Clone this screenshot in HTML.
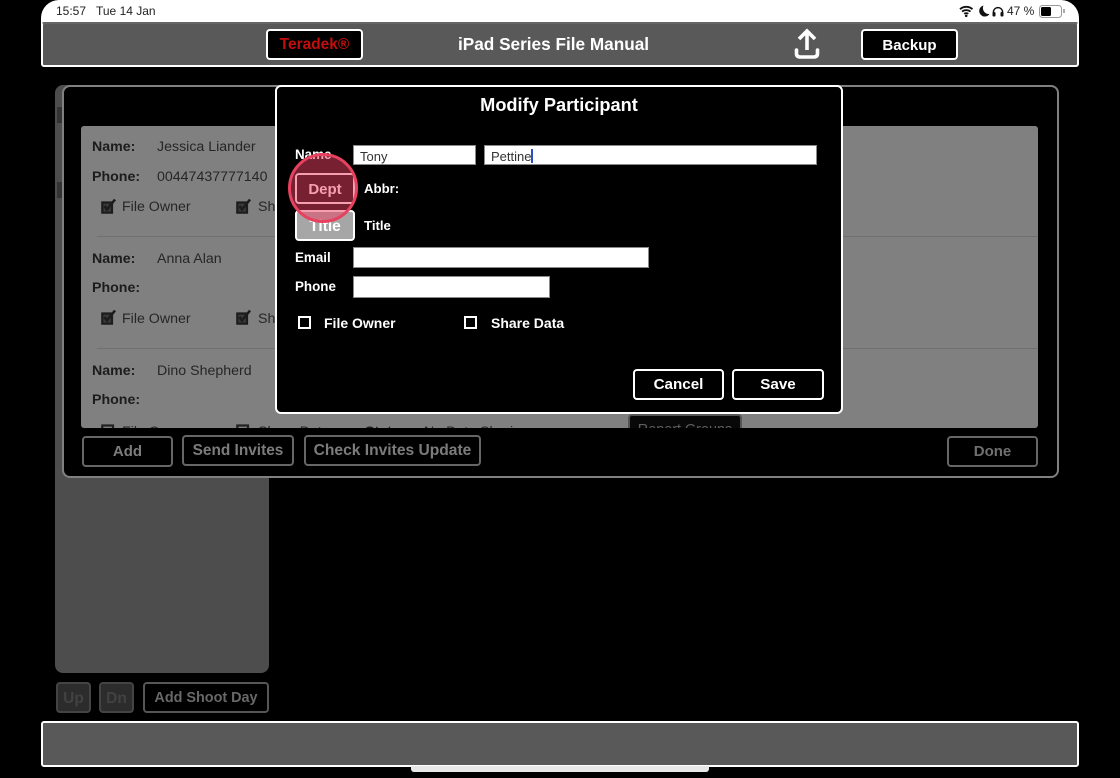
<!DOCTYPE html>
<html><head><meta charset="utf-8">
<style>
html,body{margin:0;padding:0;background:#000;}
#p{position:relative;width:1120px;height:778px;overflow:hidden;background:#000;font-family:"Liberation Sans",sans-serif;filter:blur(.35px);}
#p div{position:absolute;box-sizing:border-box;white-space:nowrap;}
.t{line-height:20px;}
.btn{border:2px solid #fff;border-radius:4px;background:#000;color:#fff;font-weight:bold;text-align:center;font-size:15.5px;}
.dim{border:2px solid #666;border-radius:4px;color:#7c7c7c;font-weight:bold;text-align:center;font-size:15.5px;background:#000;}
.lb{font-size:14.2px;color:#1c1c1c;font-weight:bold;}
.v{font-size:14.2px;color:#262626;}
.w{color:#fff;font-weight:bold;font-size:13.4px;}
.in{background:#fff;border:1.5px solid #8a8a8a;color:#333;font-size:13px;line-height:21px;padding-left:6px;}
.sep{height:1px;background:#707070;}
.cb{width:13px;height:13px;border:2px solid #fff;background:#000;}
</style></head><body>
<div id="p">
<!-- status bar -->
<div style="left:41px;top:0;width:1038px;height:26px;background:#fff;border-radius:18px 18px 0 0;"></div>
<div class="t" style="left:56px;top:1px;font-size:12px;color:#222;">15:57</div>
<div class="t" style="left:96px;top:1px;font-size:12px;color:#222;">Tue 14 Jan</div>
<svg style="position:absolute;left:958px;top:4px" width="50" height="14" viewBox="0 0 50 14">
<path d="M2 5.2C5.5 2 11 2 14.5 5.2M4 7.6C6.3 5.6 10.2 5.6 12.5 7.6M6.2 9.8C7.3 8.9 9.2 8.9 10.3 9.8" fill="none" stroke="#111" stroke-width="1.8"/>
<circle cx="8.2" cy="11.8" r="1.3" fill="#111"/>
<path d="M25.5 1.5A5.6 5.6 0 1 0 31.5 10A6 6 0 0 1 25.5 1.5Z" fill="#111"/>
<path d="M35.5 10.5V7A4.7 4.7 0 0 1 44.5 7V10.5" fill="none" stroke="#111" stroke-width="1.5"/>
<rect x="34.5" y="8" width="3" height="4.5" rx="1" fill="#111"/><rect x="42.5" y="8" width="3" height="4.5" rx="1" fill="#111"/>
</svg>
<div class="t" style="left:1007px;top:1px;font-size:12px;color:#222;">47 %</div>
<div style="left:1039px;top:5px;width:23px;height:13px;border:1px solid #999;border-radius:3.5px;"></div>
<div style="left:1041px;top:7px;width:10px;height:9px;background:#000;border-radius:1.5px;"></div>
<div style="left:1063px;top:9px;width:1.5px;height:4px;background:#aaa;"></div>

<!-- header -->
<div style="left:41px;top:22px;width:1038px;height:45px;background:#595959;border:2px solid #fff;border-top-color:#666;border-radius:3px;"></div>
<div class="btn" style="left:266px;top:29px;width:97px;height:31px;color:#c40d0d;line-height:28px;">Teradek®</div>
<div class="t" style="left:458px;top:34px;font-size:17.2px;font-weight:bold;color:#fff;">iPad Series File Manual</div>
<svg style="position:absolute;left:791px;top:27px" width="32" height="34" viewBox="0 0 32 34">
<path d="M16 23V4.5M8 12L16 4L24 12" fill="none" stroke="#fff" stroke-width="3.6"/>
<path d="M5.5 23V26.5Q5.5 30 9.5 30H22.5Q26.5 30 26.5 26.5V23" fill="none" stroke="#fff" stroke-width="3.6" stroke-linecap="round"/>
</svg>
<div class="btn" style="left:861px;top:29px;width:97px;height:31px;line-height:29px;font-size:15px;">Backup</div>

<!-- left panel -->
<div style="left:55px;top:85px;width:214px;height:588px;background:#4d4d4d;border-radius:8px;"></div>
<div style="left:57px;top:107px;width:5px;height:16px;background:#333;"></div>
<div style="left:57px;top:182px;width:5px;height:16px;background:#333;"></div>
<div class="dim" style="left:56px;top:682px;width:35px;height:31px;background:#2c2c2c;border-color:#444;color:#424242;line-height:29px;">Up</div>
<div class="dim" style="left:99px;top:682px;width:35px;height:31px;background:#2c2c2c;border-color:#444;color:#424242;line-height:29px;">Dn</div>
<div class="dim" style="left:143px;top:682px;width:126px;height:31px;border-color:#565656;color:#686868;line-height:28px;font-size:14.4px;">Add Shoot Day</div>

<!-- bottom bar -->
<div style="left:41px;top:721px;width:1038px;height:46px;background:#595959;border:2px solid #fff;border-radius:3px;"></div>
<div style="left:411px;top:766px;width:298px;height:5.5px;background:#e8e8e8;border-radius:0 0 3px 3px;"></div>

<!-- main dimmed dialog -->
<div style="left:62px;top:85px;width:997px;height:393px;background:#000;border:2px solid #808080;border-radius:8px;"></div>
<div style="left:81px;top:126px;width:957px;height:302px;background:#808080;border-radius:3px;overflow:hidden;">
  <div class="lb t" style="left:11px;top:11px;">Name:</div><div class="v t" style="left:76px;top:11px;">Jessica Liander</div>
  <div class="lb t" style="left:11px;top:41px;">Phone:</div><div class="v t" style="left:76px;top:41px;">00447437777140</div>
  <svg style="position:absolute;left:20px;top:72px" width="16" height="16" viewBox="0 0 16 16"><path d="M1.3 4.5H11V14.7H1.3Z" fill="#3a3a3a" stroke="#1c1c1c" stroke-width="2.2"/><path d="M3.5 8L6 11.5L14 1.5" fill="none" stroke="#1c1c1c" stroke-width="2.6"/></svg>
  <div class="v t" style="left:41px;top:71px;">File Owner</div>
  <svg style="position:absolute;left:155px;top:72px" width="16" height="16" viewBox="0 0 16 16"><path d="M1.3 4.5H11V14.7H1.3Z" fill="#3a3a3a" stroke="#1c1c1c" stroke-width="2.2"/><path d="M3.5 8L6 11.5L14 1.5" fill="none" stroke="#1c1c1c" stroke-width="2.6"/></svg>
  <div class="v t" style="left:177px;top:71px;">Share Data</div>
  <div class="sep" style="left:16px;top:110px;width:941px;"></div>
  <div class="lb t" style="left:11px;top:123px;">Name:</div><div class="v t" style="left:76px;top:123px;">Anna Alan</div>
  <div class="lb t" style="left:11px;top:152px;">Phone:</div>
  <svg style="position:absolute;left:20px;top:183px" width="16" height="16" viewBox="0 0 16 16"><path d="M1.3 4.5H11V14.7H1.3Z" fill="#3a3a3a" stroke="#1c1c1c" stroke-width="2.2"/><path d="M3.5 8L6 11.5L14 1.5" fill="none" stroke="#1c1c1c" stroke-width="2.6"/></svg>
  <div class="v t" style="left:41px;top:183px;">File Owner</div>
  <svg style="position:absolute;left:155px;top:183px" width="16" height="16" viewBox="0 0 16 16"><path d="M1.3 4.5H11V14.7H1.3Z" fill="#3a3a3a" stroke="#1c1c1c" stroke-width="2.2"/><path d="M3.5 8L6 11.5L14 1.5" fill="none" stroke="#1c1c1c" stroke-width="2.6"/></svg>
  <div class="v t" style="left:177px;top:183px;">Share Data</div>
  <div class="sep" style="left:16px;top:222px;width:941px;"></div>
  <div class="lb t" style="left:11px;top:235px;">Name:</div><div class="v t" style="left:76px;top:235px;">Dino Shepherd</div>
  <div class="lb t" style="left:11px;top:264px;">Phone:</div>
  <svg style="position:absolute;left:20px;top:298px" width="16" height="16" viewBox="0 0 16 16"><path d="M1.3 1.5H12V14H1.3Z" fill="none" stroke="#222" stroke-width="2.2"/></svg>
  <div class="v t" style="left:41px;top:296px;">File Owner</div>
  <svg style="position:absolute;left:155px;top:298px" width="16" height="16" viewBox="0 0 16 16"><path d="M1.3 1.5H12V14H1.3Z" fill="none" stroke="#222" stroke-width="2.2"/></svg>
  <div class="v t" style="left:177px;top:296px;">Share Data</div>
  <div class="lb t" style="left:284px;top:296px;">Status:</div><div class="v t" style="left:343px;top:296px;">No Data Sharing</div>
  <div style="left:547px;top:288px;width:114px;height:30px;background:#080808;border:2px solid #555;border-radius:4px;color:#5f5f5f;font-size:14.4px;text-align:center;line-height:28px;">Report Groups</div>
</div>
<div class="dim" style="left:82px;top:436px;width:91px;height:31px;line-height:28px;font-size:15px;">Add</div>
<div class="dim" style="left:182px;top:435px;width:112px;height:31px;line-height:27px;font-size:15.4px;">Send Invites</div>
<div class="dim" style="left:304px;top:435px;width:177px;height:31px;line-height:27px;font-size:15.6px;">Check Invites Update</div>
<div class="dim" style="left:947px;top:436px;width:91px;height:31px;line-height:28px;font-size:15px;color:#707070;">Done</div>

<!-- modal -->
<div style="left:275px;top:85px;width:568px;height:329px;background:#000;border:2px solid #fff;border-radius:6px;"></div>
<div class="t" style="left:275px;top:95px;width:568px;text-align:center;font-size:18.2px;font-weight:bold;color:#fff;">Modify Participant</div>
<div class="w t" style="left:295px;top:145px;">Name</div>
<div class="in" style="left:353px;top:145px;width:123px;height:20px;">Tony</div>
<div class="in" style="left:484px;top:145px;width:333px;height:20px;">Pettine</div>
<div style="left:531px;top:149px;width:1.5px;height:14px;background:#2a4fc4;"></div>
<div class="btn" style="left:295px;top:210px;width:60px;height:31px;background:#a6a6a6;color:#fff;line-height:29px;">Title</div>
<div class="w t" style="left:364px;top:179px;font-size:13.2px;">Abbr:</div>
<div class="w t" style="left:364px;top:216px;font-size:13.2px;">Title</div>
<div class="w t" style="left:295px;top:248px;">Email</div>
<div class="in" style="left:353px;top:247px;width:296px;height:21px;"></div>
<div class="w t" style="left:295px;top:277px;">Phone</div>
<div class="in" style="left:353px;top:276px;width:197px;height:22px;"></div>
<div class="cb" style="left:298px;top:316px;"></div>
<div class="w t" style="left:324px;top:313px;font-size:14px;">File Owner</div>
<div class="cb" style="left:464px;top:316px;"></div>
<div class="w t" style="left:491px;top:313px;font-size:14px;">Share Data</div>
<div class="btn" style="left:633px;top:369px;width:91px;height:31px;line-height:28px;font-size:15.2px;">Cancel</div>
<div class="btn" style="left:732px;top:369px;width:92px;height:31px;line-height:28px;font-size:15.2px;">Save</div>

<!-- highlight -->
<div class="btn" style="left:295px;top:173px;width:60px;height:31px;line-height:29px;background:#000;font-size:15px;">Dept</div>
<div style="left:288px;top:153px;width:70px;height:70px;border-radius:50%;background:rgba(236,64,100,.5);border:3.5px solid #e6415f;"></div>
</div>
</body></html>
